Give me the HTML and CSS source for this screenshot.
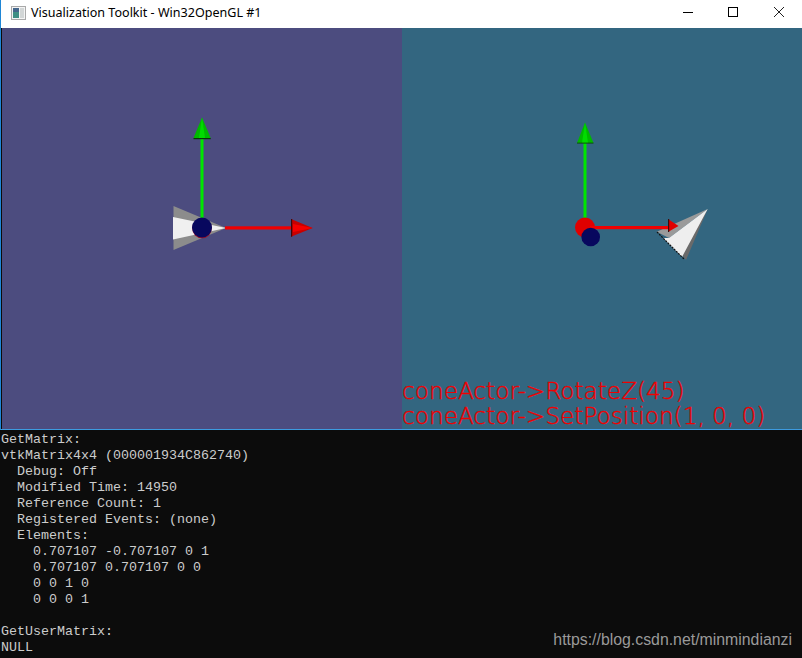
FILE: index.html
```html
<!DOCTYPE html>
<html lang="en">
<head>
<meta charset="utf-8">
<title>Visualization Toolkit - Win32OpenGL #1</title>
<link rel="stylesheet" href="styles.css">
</head>
<body>
<div class="window">
  <header class="titlebar">
    <svg class="app-icon" width="15" height="14" viewBox="0 0 15 14">
      <rect x="0.5" y="0.5" width="14" height="13" fill="#f4f4f4" stroke="#a9a9a9"/>
      <rect x="2" y="2" width="6" height="10" fill="#3f8f84"/>
      <rect x="2" y="2" width="6" height="4" fill="#45678c"/>
      <rect x="9" y="2" width="4" height="10" fill="#d2d6d6"/>
    </svg>
    <span class="title">Visualization Toolkit - Win32OpenGL #1</span>
    <div class="controls">
      <svg class="ctl" width="46" height="28" viewBox="0 0 46 28"><path d="M19 12.5H29" stroke="#000" fill="none"/></svg>
      <svg class="ctl" width="46" height="28" viewBox="0 0 46 28"><rect x="18.5" y="7.5" width="9" height="9" stroke="#000" fill="none"/></svg>
      <svg class="ctl" width="46" height="28" viewBox="0 0 46 28"><path d="M18 7L28 17M28 7L18 17" stroke="#222" fill="none"/></svg>
    </div>
  </header>
  <main class="render">
    <section class="view view-left">
      <svg class="scene" width="400" height="400" viewBox="2 28 400 400">
        <polygon points="173.5,206 226,228 173.5,250" fill="#8c8c8c"/>
        <polygon points="173,217 226,228 173,239.5" fill="#f0f0f0"/>
        <rect x="200.5" y="138" width="3" height="90" fill="#00e600"/>
        <polygon points="202,117.5 210.7,138 193.5,138" fill="#00b800"/>
        <polygon points="202,117.5 205,138 199,138" fill="#00dc00"/>
        <rect x="193.5" y="138" width="17.2" height="1.2" fill="#063406"/>
        <rect x="225" y="226.3" width="67" height="3.2" fill="#f00000"/>
        <polygon points="312.7,228 291,219 291,236.7" fill="#c80000"/>
        <polygon points="312.7,228 293,224 293,232" fill="#f50000"/>
        <rect x="291" y="219" width="1.2" height="17.7" fill="#400808"/>
        <circle cx="202" cy="228.5" r="9.8" fill="#a01028"/>
        <circle cx="202" cy="227.5" r="10" fill="#08085e"/>
      </svg>
    </section>
    <section class="view view-right">
      <svg class="scene" width="400" height="400" viewBox="402 28 400 400">
        <rect x="583.5" y="142" width="3" height="80" fill="#00e600"/>
        <polygon points="585,122.5 593.5,143 577,143" fill="#00b800"/>
        <polygon points="585,122.5 588,143 582,143" fill="#00dc00"/>
        <rect x="577" y="142.6" width="16.5" height="1" fill="#0a500a"/>
        <circle cx="585" cy="227.5" r="10" fill="#e00000"/>
        <polygon points="707.7,209 656.7,231.7 669,238" fill="#9a9a9a"/>
        <polygon points="707.7,209 686,260 681,254" fill="#6a6a6a"/>
        <polygon points="707.7,209 669,238 663,238 682,257" fill="#eeeeee"/>
        <path d="M657 232L684 259" stroke="#111" stroke-width="1.2" stroke-dasharray="2 1" fill="none"/>
        <rect x="590" y="226" width="78" height="3.2" fill="#f00000"/>
        <polygon points="678.5,226 668,219 668,232" fill="#e00000"/>
        <rect x="668" y="219" width="1.2" height="13" fill="#400808"/>
        <circle cx="590.7" cy="237" r="9.3" fill="#08085e"/>
      </svg>
      <div class="note">
        <div>coneActor-&gt;RotateZ(45)</div>
        <div>coneActor-&gt;SetPosition(1, 0, 0)</div>
      </div>
    </section>
  </main>
  <pre class="console">GetMatrix:
vtkMatrix4x4 (000001934C862740)
  Debug: Off
  Modified Time: 14950
  Reference Count: 1
  Registered Events: (none)
  Elements:
    0.707107 -0.707107 0 1
    0.707107 0.707107 0 0
    0 0 1 0
    0 0 0 1

GetUserMatrix:
NULL</pre>
  <div class="watermark">https://blog.csdn.net/minmindianzi</div>
</div>
</body>
</html>
```
FILE: styles.css
```css
html, body {
  margin: 0;
  padding: 0;
  height: 100%;
  overflow: hidden;
  background: #0c0c0c;
}
.window {
  position: relative;
  width: 802px;
  height: 658px;
  display: flex;
  flex-direction: column;
  overflow: hidden;
}
.titlebar {
  height: 28px;
  flex: none;
  display: flex;
  align-items: center;
  background: #fff;
  padding-left: 10px;
  border-left: 1px solid #1f86d6;
  box-sizing: border-box;
}
.app-icon {
  flex: none;
  margin-right: 5px;
  margin-top: -3px;
}
.title {
  font: 12.55px/16px "Noto Sans", sans-serif;
  color: #000;
  margin-top: -3px;
}
.controls {
  margin-left: auto;
  display: flex;
}
.ctl {
  display: block;
}
.render {
  flex: none;
  height: 402px;
  display: flex;
  padding-left: 1px;
  background: #0c0c0c;
  box-sizing: border-box;
  border-left: 1px solid #1f86d6;
  border-bottom: 1px solid #3d9be0;
}
.view {
  position: relative;
  width: 400px;
  height: 401px;
  overflow: hidden;
}
.view-left { background: #4c4c7f; }
.view-right { background: #336680; }
.scene { display: block; }
.note {
  position: absolute;
  left: 0;
  bottom: 1px;
  font: 200 23.2px/25px "DejaVu Sans", sans-serif;
  -webkit-text-stroke: 0.35px #f00000;
  color: #f00000;
  white-space: nowrap;
}
.console {
  flex: 1;
  margin: 0;
  padding: 2px 0 0 1px;
  background: #0c0c0c;
  color: #cccccc;
  font: 13.333px/16px "Liberation Mono", monospace;
}
.watermark {
  position: absolute;
  right: 10px;
  bottom: 8px;
  font: 15.85px/20px "Liberation Sans", sans-serif;
  color: #9a9a9a;
}
```
